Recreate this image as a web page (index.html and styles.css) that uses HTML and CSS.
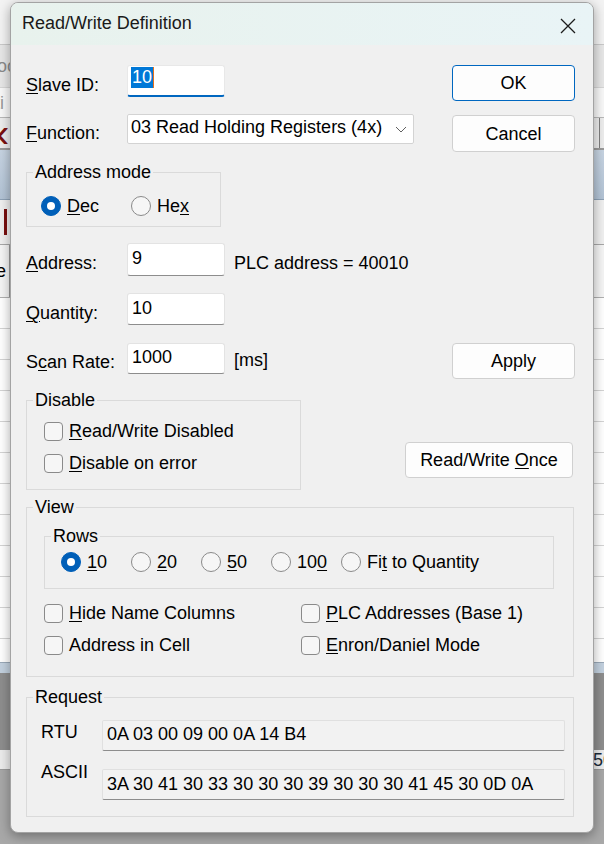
FILE: index.html
```html
<!DOCTYPE html>
<html>
<head>
<meta charset="utf-8">
<title>Read/Write Definition</title>
<link rel="stylesheet" href="styles.css">
</head>
<body>
<div class="app">
  <div class="band b-title"></div>
  <div class="band b-menu"><span class="ghost g-left">Too</span></div>
  <div class="band b-tab"><span class="ghost g-left2">Acti</span></div>
  <div class="band b-tool"><span class="arrow">&lsaquo;</span><span class="tool-sep"></span></div>
  <div class="band b-head"></div>
  <div class="band b-sub"><span class="bar-red"></span></div>
  <div class="band b-colhead"><span class="colcell">e</span></div>
  <div class="band b-grid"></div>
  <div class="band b-blue"></div>
  <div class="band b-dark"></div>
  <div class="band b-status"><span class="ghost g-right">50</span></div>
  <div class="band b-bottom"></div>
</div>

<div class="dialog">
  <div class="titlebar">
    <span class="title">Read/Write Definition</span>
    <svg class="close" width="16" height="16" viewBox="0 0 16 16"><path d="M1 1L15 15M15 1L1 15" stroke="#1c1c1c" stroke-width="1.3" fill="none"/></svg>
  </div>
  <div class="body">
    <div class="row r-slave">
      <span class="lbl lbl-a"><u>S</u>lave ID:</span>
      <div class="edit focus"><span class="sel">10</span><span class="caret"></span></div>
      <div class="btn btn-default"><span>OK</span></div>
    </div>
    <div class="row r-func">
      <span class="lbl lbl-b"><u>F</u>unction:</span>
      <div class="combo"><span>03 Read Holding Registers (4x)</span><svg class="chev" width="12" height="7" viewBox="0 0 12 7"><path d="M1 1L6 6L11 1" stroke="#606060" stroke-width="1" fill="none"/></svg></div>
      <div class="btn btn-cancel"><span>Cancel</span></div>
    </div>
    <fieldset class="grp grp-addr">
      <legend>Address mode</legend>
      <div class="grp-in addr-in">
        <div class="opt opt-dec"><span class="radio on"></span><span><u>D</u>ec</span></div>
        <div class="opt"><span class="radio"></span><span>He<u>x</u></span></div>
      </div>
    </fieldset>
    <div class="row r-address">
      <span class="lbl lbl-a"><u>A</u>ddress:</span>
      <div class="edit">9</div>
      <span class="note">PLC address = 40010</span>
    </div>
    <div class="row r-qty">
      <span class="lbl lbl-a"><u>Q</u>uantity:</span>
      <div class="edit edit-q">10</div>
    </div>
    <div class="row r-scan">
      <span class="lbl lbl-c">S<u>c</u>an Rate:</span>
      <div class="edit edit-s">1000</div>
      <span class="note note-ms">[ms]</span>
      <div class="btn btn-apply"><span>Apply</span></div>
    </div>
    <div class="row r-disable">
      <fieldset class="grp grp-dis">
        <legend>Disable</legend>
        <div class="grp-in dis-in">
          <div class="opt"><span class="check"></span><span><u>R</u>ead/Write Disabled</span></div>
          <div class="opt"><span class="check"></span><span><u>D</u>isable on error</span></div>
        </div>
      </fieldset>
      <div class="btn btn-once"><span>Read/Write <u>O</u>nce</span></div>
    </div>
    <fieldset class="grp grp-view">
      <legend>View</legend>
      <div class="grp-in view-in">
        <fieldset class="grp grp-rows">
          <legend>Rows</legend>
          <div class="grp-in rows-in">
            <div class="opt ropt"><span class="radio on"></span><span><u>1</u>0</span></div>
            <div class="opt ropt"><span class="radio"></span><span><u>2</u>0</span></div>
            <div class="opt ropt"><span class="radio"></span><span><u>5</u>0</span></div>
            <div class="opt ropt"><span class="radio"></span><span>10<u>0</u></span></div>
            <div class="opt"><span class="radio"></span><span>Fi<u>t</u> to Quantity</span></div>
          </div>
        </fieldset>
        <div class="checks">
          <div class="opt"><span class="check"></span><span><u>H</u>ide Name Columns</span></div>
          <div class="opt"><span class="check"></span><span><u>P</u>LC Addresses (Base 1)</span></div>
          <div class="opt"><span class="check"></span><span>Address in Cell</span></div>
          <div class="opt"><span class="check"></span><span><u>E</u>nron/Daniel Mode</span></div>
        </div>
      </div>
    </fieldset>
    <fieldset class="grp grp-req">
      <legend>Request</legend>
      <div class="grp-in req-in">
        <span class="rlbl rlbl-1">RTU</span>
        <div class="field field-1">0A 03 00 09 00 0A 14 B4</div>
        <span class="rlbl rlbl-2">ASCII</span>
        <div class="field field-2">3A 30 41 30 33 30 30 30 39 30 30 30 41 45 30 0D 0A</div>
      </div>
    </fieldset>
  </div>
</div>
</body>
</html>
```

FILE: styles.css
```css
* { box-sizing: border-box; }

html, body {
  margin: 0;
  padding: 0;
}

body {
  width: 604px;
  height: 844px;
  overflow: hidden;
  position: relative;
  font-family: "Liberation Sans", Arial, sans-serif;
  font-size: 18px;
  line-height: 20px;
  color: #000;
  background: #a9a9a9;
}

u {
  text-decoration: underline;
  text-decoration-thickness: 1px;
  text-underline-offset: 2px;
}

/* ---------- background application window ---------- */
.app {
  display: flex;
  flex-direction: column;
  width: 604px;
  height: 844px;
}
.band { width: 100%; flex: none; display: flex; align-items: center; overflow: hidden; }
.b-title { height: 45px; background: #f3f3f3; border-bottom: 1px solid #c9c9c9; }
.b-menu { height: 43px; background: #e7e7e7; border-bottom: 1px solid #d6d6d6; }
.b-tab { height: 30px; background: #f8f8f8; border-bottom: 1px solid #b8b8b8; }
.b-tool { height: 32px; background: #ededed; border-bottom: 2px solid #9a9a9a; justify-content: space-between; }
.b-head { height: 50px; background: linear-gradient(#c7d4e2, #b2c3d5); border-bottom: 1px solid #8ea2b6; }
.b-sub { height: 45px; background: #f0f0f0; border-bottom: 1px solid #a8a8a8; }
.b-colhead { height: 53px; background: #f5f5f5; border-bottom: 1px solid #b0b0b0; }
.b-grid {
  height: 364px;
  background: repeating-linear-gradient(#ffffff 0 30px, #d4d4d4 30px 31px);
}
.b-blue { height: 11px; background: #c3d1df; border-top: 1px solid #9aa9b8; }
.b-dark { height: 77px; background: #8e8e8e; }
.b-status { height: 20px; background: #ececec; justify-content: flex-end; border-bottom: 1px solid #9a9a9a; }
.b-bottom { flex: 1; background: #a8a8a8; }

.ghost { color: #8a8a8a; font-size: 18px; }
.g-left { margin-left: -12px; }
.g-left2 { margin-left: -26px; color: #9a9a9a; }
.g-right { margin-right: -9px; color: #1b2a3a; }
.arrow { color: #7a1010; font-size: 40px; line-height: 30px; margin-left: -4px; }
.tool-sep { width: 1px; height: 32px; background: #7d7d7d; margin-right: 4px; }
.bar-red { width: 3px; height: 26px; background: #7a1010; margin-left: 4px; }
.colcell { width: 10px; height: 53px; border-right: 1px solid #9a9a9a; font-size: 18px; line-height: 53px; text-indent: -4px; }

/* ---------- dialog ---------- */
.dialog {
  position: absolute;
  left: 10px;
  top: 2px;
  width: 584px;
  height: 831px;
  background: #f0f0f0;
  border: 1px solid #a3a3a3;
  border-radius: 8px;
  box-shadow: 0 3px 12px rgba(0, 0, 0, 0.35);
  overflow: hidden;
}

.titlebar {
  height: 42px;
  display: flex;
  align-items: flex-start;
  justify-content: space-between;
  background: linear-gradient(90deg, #e8f2ed, #e9f4f6);
  padding: 10px 17px 0 11px;
}
.title { font-size: 18px; line-height: 20px; color: #1a1a1a; }
.close { margin-top: 5px; }

.body {
  padding: 20px 18px 0 15px;
  display: flex;
  flex-direction: column;
  align-items: flex-start;
}

.row { display: flex; align-items: flex-start; width: 100%; }

.lbl { width: 101px; flex: none; white-space: nowrap; }
.lbl-a { margin-top: 10px; }
.lbl-b { margin-top: 9px; }
.lbl-c { margin-top: 9px; }

.edit {
  width: 98px;
  height: 33px;
  background: #fff;
  border: 1px solid #e3e3e3;
  border-bottom-color: #8d8d8d;
  border-radius: 3px;
  padding: 4px 4px 0 4px;
  flex: none;
}
.edit-q { height: 32px; }
.edit-s { height: 31px; padding-top: 3px; }
.edit.focus {
  height: 32px;
  border-color: #e8e8e8;
  border-bottom: 2px solid #0067c0;
  padding: 1px 3px 0 3px;
  display: flex;
  align-items: flex-start;
}
.sel { background: #0078d7; color: #fff; padding: 0 1px; line-height: 21px; }
.caret { width: 1px; height: 21px; background: #e8701a; }

.note { margin-left: 9px; margin-top: 10px; white-space: nowrap; }
.note-ms { margin-top: 7px; }

.combo {
  width: 287px;
  height: 30px;
  background: #fff;
  border: 1px solid #d3d3d3;
  border-radius: 2px;
  padding: 2px 0 0 3px;
  display: flex;
  justify-content: space-between;
  align-items: flex-start;
  flex: none;
  white-space: nowrap;
}
.chev { margin: 9px 6px 0 0; }

.btn {
  margin-left: auto;
  width: 123px;
  height: 36px;
  background: #fdfdfd;
  border: 1px solid #d0d0d0;
  border-radius: 4px;
  display: flex;
  align-items: center;
  justify-content: center;
  flex: none;
  white-space: nowrap;
}
.btn-default { border-color: #0067c0; }
.btn-cancel { height: 37px; margin-top: 1px; }
.btn-once { width: 168px; margin-right: 2px; margin-top: 52px; }

.r-func { margin-top: 13px; }
.r-address { margin-top: 16px; }
.r-qty { margin-top: 17px; }
.r-scan { margin-top: 18px; }
.r-disable { margin-top: 11px; }

/* group boxes */
.grp {
  margin: 0;
  padding: 0 0 0 6px;
  border: 1px solid #dadada;
  min-width: 0;
}
.grp legend {
  padding: 0 2px;
  line-height: 20px;
}
.grp-in { display: flex; }

.grp-addr { width: 195px; margin-top: 10px; }
.addr-in { padding: 14px 0 10px 8px; }
.opt { display: flex; align-items: center; gap: 6px; white-space: nowrap; height: 20px; }
.opt-dec { width: 90px; }

.radio {
  width: 20px;
  height: 20px;
  border-radius: 50%;
  border: 1px solid #8a8a8a;
  background: #f6f6f6;
  flex: none;
  position: relative;
}
.radio.on { background: #005fb8; border-color: #005fb8; }
.radio.on::after {
  content: "";
  position: absolute;
  left: 5px;
  top: 5px;
  width: 8px;
  height: 8px;
  border-radius: 50%;
  background: #fff;
}

.check {
  width: 19px;
  height: 19px;
  border: 1px solid #8a8a8a;
  border-radius: 4px;
  background: #f6f6f6;
  flex: none;
}

.grp-dis { width: 275px; }
.dis-in { flex-direction: column; gap: 12px; padding: 11px 0 16px 11px; }

.grp-view { width: 548px; margin-top: 7px; }
.view-in { flex-direction: column; padding: 9px 19px 21px 11px; }
.grp-rows { width: 100%; }
.rows-in { padding: 6px 0 16px 10px; }
.ropt { width: 70px; }

.checks {
  margin-top: 14px;
  display: grid;
  grid-template-columns: 257px 1fr;
  row-gap: 12px;
}

.grp-req { width: 548px; margin-top: 10px; }
.req-in {
  display: grid;
  grid-template-columns: 61px 463px;
  row-gap: 18px;
  padding: 13px 0 16px 8px;
}
.rlbl { align-self: start; }
.rlbl-1 { margin-top: 2px; }
.rlbl-2 { margin-top: -7px; }
.field {
  height: 31px;
  background: #f2f2f2;
  border: 1px solid #e0e0e0;
  border-bottom-color: #8d8d8d;
  border-radius: 2px;
  padding: 3px 0 0 4px;
  white-space: nowrap;
}
.field-2 { padding-top: 4px; }
```
